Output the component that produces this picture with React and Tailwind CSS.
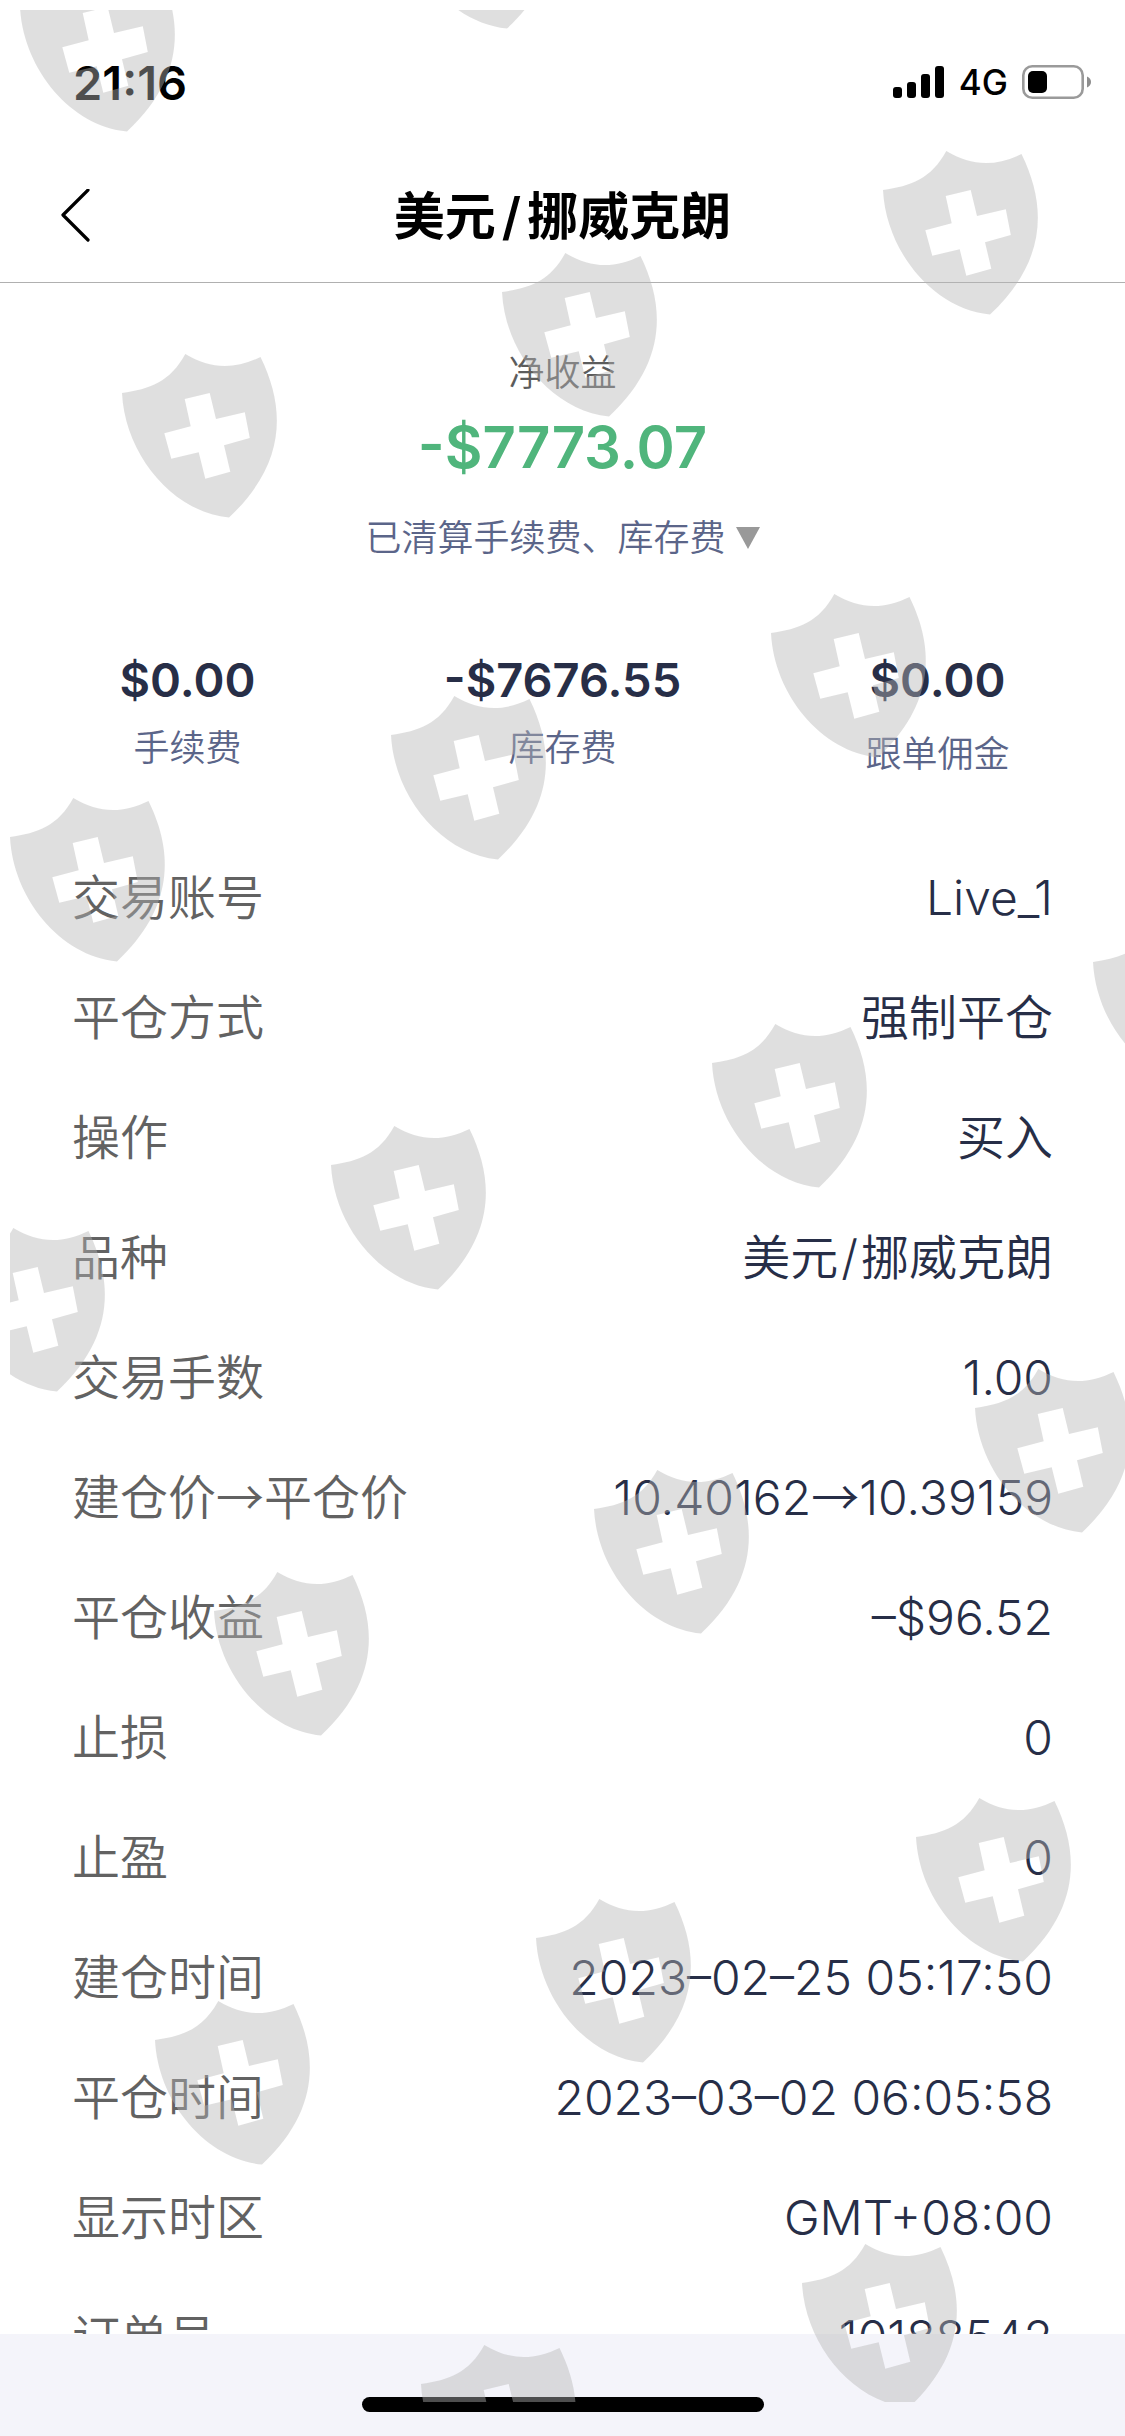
const fees = [
  { value: "$0.00", label: "手续费", labelClass: "" },
  { value: "-$7676.55", label: "库存费", labelClass: "" },
  { value: "$0.00", label: "跟单佣金", labelClass: "pt-[6px]" },
];

const rows = [
  ["交易账号", "Live_1"],
  ["平仓方式", "强制平仓"],
  ["操作", "买入"],
  ["品种", "美元/挪威克朗"],
  ["交易手数", "1.00"],
  ["建仓价→平仓价", "10.40162→10.39159"],
  ["平仓收益", "–$96.52"],
  ["止损", "0"],
  ["止盈", "0"],
  ["建仓时间", "2023–02–25 05:17:50"],
  ["平仓时间", "2023–03–02 06:05:58"],
  ["显示时区", "GMT+08:00"],
  ["订单号", "10188542"],
];

const shields = [
  [10, -42], [390, -145],
  [112, 344], [492, 243], [873, 141],
  [0, 788], [381, 686], [761, 584],
  [-60, 1218], [321, 1116], [702, 1014], [1083, 913],
  [204, 1562], [584, 1460], [965, 1359],
  [145, 1991], [526, 1889], [906, 1788],
  [411, 2335], [792, 2234],
];

function StatusBar() {
  return (
    <div className="flex h-[150px] shrink-0 items-center justify-between pt-[14px] pr-[33px] pl-[73px] text-black">
      <time className="text-[47px] leading-none font-semibold">21:16</time>
      <div className="flex items-center gap-[14px]">
        <svg width="52" height="32" viewBox="0 0 52 32" aria-label="信号" role="img">
          <rect x="0" y="21" width="9" height="11" rx="3" />
          <rect x="14" y="16" width="9" height="16" rx="3" />
          <rect x="28" y="8" width="9" height="24" rx="3" />
          <rect x="42" y="0" width="9" height="32" rx="3" />
        </svg>
        <span className="text-[35px] leading-none font-medium">4G</span>
        <svg width="70" height="34" viewBox="0 0 70 34" aria-label="电池" role="img">
          <rect x="1.3" y="1.3" width="59.4" height="31.4" rx="9" fill="none" stroke="#9a9a9a" strokeWidth="2.6" />
          <rect x="6" y="6" width="19" height="22" rx="5" />
          <path d="M65 11.5c2.6 1 4 3 4 5.500s-1.400 4.500-4 5.500z" fill="#8e8e8e" />
        </svg>
      </div>
    </div>
  );
}

// Draws the arrow in the CJK face (full width) and gives the slash some room.
function RichText({ text }) {
  return text.split(/([→/])/).map((part, i) => {
    if (part === "→") {
      return <span key={i} className="font-['Noto_Sans_CJK_SC',sans-serif] leading-[0]">→</span>;
    }
    if (part === "/") {
      return <span key={i} className="px-[3px]">/</span>;
    }
    return <span key={i}>{part}</span>;
  });
}

function Watermark() {
  return (
    <svg
      aria-hidden="true"
      className="pointer-events-none absolute top-[10px] left-[10px] h-[calc(100%-44px)] w-[calc(100%-10px)] overflow-hidden"
    >
      <defs>
        <path
          id="shield"
          fillRule="evenodd"
          d="M0 39C28 35 48 28 63.300 0C88 15 112 16 138.500 3C164 55 164 110 107 163.500C50 158 3 100 0 39ZM62.700 45L68.700 72.300L42.300 79.300L49.300 104.700L76.700 98.300L83.300 124.700L108.300 117.700L102 91.300L127.800 84L122.800 58.300L94 65L87.700 39Z"
        />
      </defs>
      {shields.map(([x, y]) => (
        <use key={x + "," + y} href="#shield" x={x} y={y} fill="#b4b4b4" fillOpacity="0.43" />
      ))}
    </svg>
  );
}

export default function App() {
  return (
    <div
      lang="zh-CN"
      className="relative flex h-screen flex-col overflow-hidden bg-white font-['Inter','Noto_Sans_CJK_SC',sans-serif] text-[#272e47]"
    >
      <StatusBar />
      <header className="grid h-[133px] shrink-0 grid-cols-[1fr_auto_1fr] items-center border-b border-[#b0b0b0] px-[60px] text-black">
        <button type="button" aria-label="返回" className="justify-self-start">
          <svg width="31" height="54" viewBox="0 0 31 54" fill="none" stroke="currentColor" strokeWidth="3.200" strokeLinecap="round" strokeLinejoin="round">
            <path d="M28 1L3 26L28 51" />
          </svg>
        </button>
        <h1 className="text-[51px] leading-none font-semibold">
          美元<span className="px-[6px]">/</span>挪威克朗
        </h1>
      </header>

      <main className="flex-1 overflow-y-auto [scrollbar-width:none]">
        <section className="flex flex-col items-center pt-[63px]">
          <h2 className="text-[36px] leading-[54px] font-[350] text-[#5c5c5c]">净收益</h2>
          <p className="mt-[11px] text-[58px] leading-[72px] font-semibold text-[#50b57c]">-$7773.07</p>
          <button type="button" className="mt-7 flex items-center gap-[10px] text-[36px] leading-[54px] font-[350] text-[#5b6589]">
            已清算手续费、库存费
            <svg width="24" height="22" viewBox="0 0 24 22" fill="#999999" aria-hidden="true">
              <path d="M0 0H24L12 22Z" />
            </svg>
          </button>
        </section>

        <section className="mt-[85px] grid grid-cols-3 text-center">
          {fees.map((fee) => (
            <div key={fee.label} className="flex flex-col gap-[11px]">
              <strong className="text-[47px] leading-[60px] font-semibold">{fee.value}</strong>
              <span className={"text-[36px] leading-[54px] font-[350] text-[#5b6589] " + fee.labelClass}>{fee.label}</span>
            </div>
          ))}
        </section>

        <dl className="mt-[57px] px-[72px] text-[48px] font-[350]">
          {rows.map(([label, value]) => (
            <div key={label} className="flex h-[120px] items-center justify-between leading-none">
              <dt className="text-[#626262]">
                <RichText text={label} />
              </dt>
              <dd>
                <RichText text={value} />
              </dd>
            </div>
          ))}
        </dl>
      </main>

      <footer className="flex h-[102px] shrink-0 items-end justify-center bg-[#f4f4fa] pb-6">
        <div className="h-[15px] w-[402px] rounded-full bg-black" />
      </footer>

      <Watermark />
    </div>
  );
}
